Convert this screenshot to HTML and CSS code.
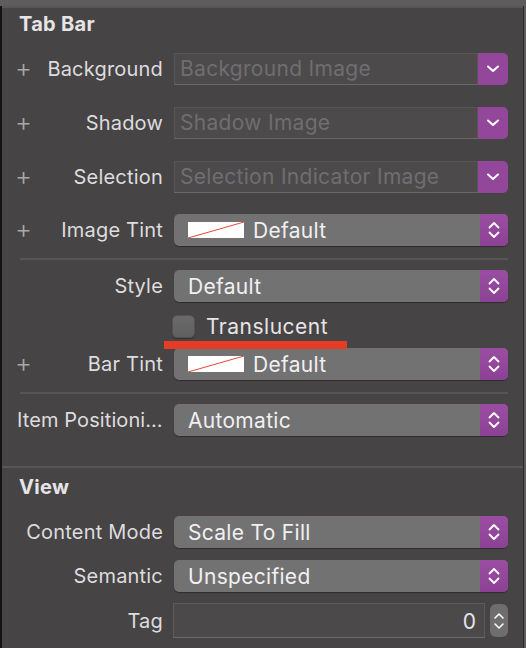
FILE: index.html
```html
<!DOCTYPE html>
<html lang="en">
<head>
    <meta charset="UTF-8">
    <meta name="viewport" content="width=device-width, initial-scale=1.0">
    <title>Tab Bar Inspector</title>
    <link rel="stylesheet" href="styles.css">
</head>
<body>

    <div class="panel">
        <div class="topline"></div>

        <div class="section-title">Tab Bar</div>

        <div class="row mt-13">
            <div class="label"><span class="plus">+</span><span class="name">Background</span></div>
            <div class="well">
                <span class="well-text">Background Image</span>
                <span class="well-btn">
                    <svg width="14" height="10" viewBox="0 0 14 10"><path d="M2 2.5 L7 7 L12 2.5" fill="none" stroke="#fff" stroke-width="2" stroke-linecap="round" stroke-linejoin="round"/></svg>
                </span>
            </div>
        </div>

        <div class="row mt-22">
            <div class="label"><span class="plus">+</span><span class="name">Shadow</span></div>
            <div class="well">
                <span class="well-text">Shadow Image</span>
                <span class="well-btn">
                    <svg width="14" height="10" viewBox="0 0 14 10"><path d="M2 2.5 L7 7 L12 2.5" fill="none" stroke="#fff" stroke-width="2" stroke-linecap="round" stroke-linejoin="round"/></svg>
                </span>
            </div>
        </div>

        <div class="row mt-22">
            <div class="label"><span class="plus">+</span><span class="name">Selection</span></div>
            <div class="well">
                <span class="well-text">Selection Indicator Image</span>
                <span class="well-btn">
                    <svg width="14" height="10" viewBox="0 0 14 10"><path d="M2 2.5 L7 7 L12 2.5" fill="none" stroke="#fff" stroke-width="2" stroke-linecap="round" stroke-linejoin="round"/></svg>
                </span>
            </div>
        </div>

        <div class="row mt-21">
            <div class="label"><span class="plus">+</span><span class="name">Image Tint</span></div>
            <div class="popup">
                <span class="swatch">
                    <svg width="56" height="16" viewBox="0 0 56 16"><rect x="0" y="0" width="56" height="16" fill="#fff"/><line x1="0" y1="16" x2="56" y2="0" stroke="#e5483b" stroke-width="1"/></svg>
                </span>
                <span class="popup-text">Default</span>
                <span class="popup-btn">
                    <svg width="14" height="22" viewBox="0 0 14 22"><path d="M2.5 8.5 L7 4 L11.5 8.5 M2.5 13.5 L7 18 L11.5 13.5" fill="none" stroke="#fff" stroke-width="1.8" stroke-linecap="round" stroke-linejoin="round"/></svg>
                </span>
            </div>
        </div>

        <div class="sep mt-12"></div>

        <div class="row mt-10">
            <div class="label"><span class="name">Style</span></div>
            <div class="popup">
                <span class="popup-text">Default</span>
                <span class="popup-btn">
                    <svg width="14" height="22" viewBox="0 0 14 22"><path d="M2.5 8.5 L7 4 L11.5 8.5 M2.5 13.5 L7 18 L11.5 13.5" fill="none" stroke="#fff" stroke-width="1.8" stroke-linecap="round" stroke-linejoin="round"/></svg>
                </span>
            </div>
        </div>

        <div class="row check-row mt-12">
            <div class="label"></div>
            <div class="check">
                <span class="checkbox"></span>
                <span class="check-text">Translucent</span>
            </div>
            <div class="marker"></div>
        </div>

        <div class="row mt-10">
            <div class="label"><span class="plus">+</span><span class="name">Bar Tint</span></div>
            <div class="popup">
                <span class="swatch">
                    <svg width="56" height="16" viewBox="0 0 56 16"><rect x="0" y="0" width="56" height="16" fill="#fff"/><line x1="0" y1="16" x2="56" y2="0" stroke="#e5483b" stroke-width="1"/></svg>
                </span>
                <span class="popup-text">Default</span>
                <span class="popup-btn">
                    <svg width="14" height="22" viewBox="0 0 14 22"><path d="M2.5 8.5 L7 4 L11.5 8.5 M2.5 13.5 L7 18 L11.5 13.5" fill="none" stroke="#fff" stroke-width="1.8" stroke-linecap="round" stroke-linejoin="round"/></svg>
                </span>
            </div>
        </div>

        <div class="sep mt-12"></div>

        <div class="row mt-10">
            <div class="label wide"><span class="name">Item Positioning</span></div>
            <div class="popup">
                <span class="popup-text">Automatic</span>
                <span class="popup-btn">
                    <svg width="14" height="22" viewBox="0 0 14 22"><path d="M2.5 8.5 L7 4 L11.5 8.5 M2.5 13.5 L7 18 L11.5 13.5" fill="none" stroke="#fff" stroke-width="1.8" stroke-linecap="round" stroke-linejoin="round"/></svg>
                </span>
            </div>
        </div>

        <div class="full-sep"></div>

        <div class="section-title view-title">View</div>

        <div class="row mt-10">
            <div class="label"><span class="name">Content Mode</span></div>
            <div class="popup">
                <span class="popup-text">Scale To Fill</span>
                <span class="popup-btn">
                    <svg width="14" height="22" viewBox="0 0 14 22"><path d="M2.5 8.5 L7 4 L11.5 8.5 M2.5 13.5 L7 18 L11.5 13.5" fill="none" stroke="#fff" stroke-width="1.8" stroke-linecap="round" stroke-linejoin="round"/></svg>
                </span>
            </div>
        </div>

        <div class="row mt-12">
            <div class="label"><span class="name">Semantic</span></div>
            <div class="popup">
                <span class="popup-text">Unspecified</span>
                <span class="popup-btn">
                    <svg width="14" height="22" viewBox="0 0 14 22"><path d="M2.5 8.5 L7 4 L11.5 8.5 M2.5 13.5 L7 18 L11.5 13.5" fill="none" stroke="#fff" stroke-width="1.8" stroke-linecap="round" stroke-linejoin="round"/></svg>
                </span>
            </div>
        </div>

        <div class="row tag-row mt-11">
            <div class="label"><span class="name">Tag</span></div>
            <div class="tag">
                <span class="tag-field">0</span>
                <span class="stepper">
                    <svg width="14" height="26" viewBox="0 0 14 26"><path d="M3 10 L7 6 L11 10 M3 16 L7 20 L11 16" fill="none" stroke="#fff" stroke-width="1.6" stroke-linecap="round" stroke-linejoin="round"/></svg>
                </span>
            </div>
        </div>
    </div>

</body>
</html>
```

FILE: styles.css
```css
body {
    margin: 0;
    padding: 0;
    background-color: #5e5c5d;
    font-family: Inter, "Noto Sans", sans-serif;
    color: #dedcde;
    width: 526px;
    height: 648px;
    overflow: hidden;
}

.panel {
    width: 521px;
    height: 648px;
    background-color: #464445;
    border-left: 2px solid #141314;
    border-right: 1px solid #2a292a;
}

.topline {
    margin-top: 6px;
    height: 2px;
    background-color: #585657;
}

.section-title {
    height: 32px;
    line-height: 32px;
    padding-left: 17px;
    font-size: 20px;
    font-weight: 700;
    letter-spacing: 0.3px;
    color: #e6e4e6;
}

.view-title {
    height: 38px;
    line-height: 38px;
}

/* spacing between rows */
.mt-10 { margin-top: 10px; }
.mt-11 { margin-top: 11px; }
.mt-12 { margin-top: 12px; }
.mt-13 { margin-top: 13px; }
.mt-21 { margin-top: 21px; }
.mt-22 { margin-top: 22px; }

.row {
    display: flex;
    align-items: center;
    height: 32px;
    position: relative;
}

.label {
    width: 148px;
    margin-left: 13px;
    margin-right: 11px;
    display: flex;
    align-items: center;
    justify-content: flex-end;
    font-size: 20px;
    letter-spacing: 0.2px;
    white-space: nowrap;
}

.label .plus {
    margin-right: auto;
    font-size: 26px;
    font-weight: 300;
    color: #a9a7a9;
    line-height: 1;
    margin-top: -2px;
}

.label.wide {
    margin-left: 15px;
    width: 146px;
    justify-content: flex-start;
}

.label.wide .name {
    overflow: hidden;
    text-overflow: ellipsis;
    letter-spacing: 0.1px;
}

/* image wells */
.well {
    width: 334px;
    height: 32px;
    display: flex;
    align-items: stretch;
}

.well-text {
    flex: 1;
    background-color: #4c4a4b;
    border: 1px solid #575556;
    border-bottom-color: #6a6869;
    padding-left: 5px;
    font-size: 21px;
    letter-spacing: 0.3px;
    line-height: 30px;
    color: #706e70;
    white-space: nowrap;
    overflow: hidden;
}

.well-btn {
    width: 30px;
    background-color: #93479b;
    border-radius: 0 5px 5px 0;
    display: flex;
    align-items: center;
    justify-content: center;
}

/* popup buttons */
.popup {
    width: 334px;
    height: 32px;
    display: flex;
    align-items: center;
    background-color: #737273;
    border-radius: 5px;
    box-shadow: 0 1px 1px rgba(0, 0, 0, 0.35);
    overflow: hidden;
}

.swatch {
    margin-left: 14px;
    margin-right: 9px;
    height: 16px;
    display: flex;
}

.popup-text {
    flex: 1;
    padding-left: 14px;
    font-size: 21px;
    letter-spacing: 0.3px;
    color: #f1f0f1;
    white-space: nowrap;
}

.swatch + .popup-text {
    padding-left: 0;
}

.popup-btn {
    width: 28px;
    height: 32px;
    background: linear-gradient(#9a4ea2, #8c4294);
    display: flex;
    align-items: center;
    justify-content: center;
}

/* separators */
.sep {
    height: 2px;
    margin-left: 18px;
    width: 488px;
    background-color: #575556;
}

.full-sep {
    margin-top: 30px;
    height: 2px;
    background-color: #575556;
}

/* checkbox */
.check-row {
    height: 24px;
}

.check {
    display: flex;
    align-items: center;
    margin-left: -2px;
}

.checkbox {
    width: 23px;
    height: 23px;
    border-radius: 5px;
    background: linear-gradient(#6b6a6b, #605f60);
    border: 1px solid #545354;
    box-sizing: border-box;
    box-shadow: 0 1px 1px rgba(0, 0, 0, 0.3);
}

.check-text {
    margin-left: 11px;
    font-size: 21px;
    letter-spacing: 0.5px;
    color: #e6e4e6;
}

/* red annotation under Translucent */
.marker {
    position: absolute;
    left: 162px;
    top: 27px;
    width: 183px;
    height: 8px;
    background-color: #e63c25;
    z-index: 2;
}

/* tag field */
.tag-row {
    height: 35px;
}

.tag {
    width: 335px;
    margin-left: -1px;
    height: 35px;
    display: flex;
    align-items: center;
}

.tag-field {
    width: 312px;
    height: 35px;
    box-sizing: border-box;
    background-color: #4b494a;
    border: 1px solid #5d5b5c;
    border-bottom-color: #6c6a6b;
    text-align: right;
    padding-right: 8px;
    font-size: 21px;
    line-height: 35px;
    color: #e6e4e6;
}

.stepper {
    margin-left: 5px;
    width: 18px;
    height: 33px;
    border-radius: 6px;
    background-color: #6f6e6f;
    display: flex;
    align-items: center;
    justify-content: center;
}
```
